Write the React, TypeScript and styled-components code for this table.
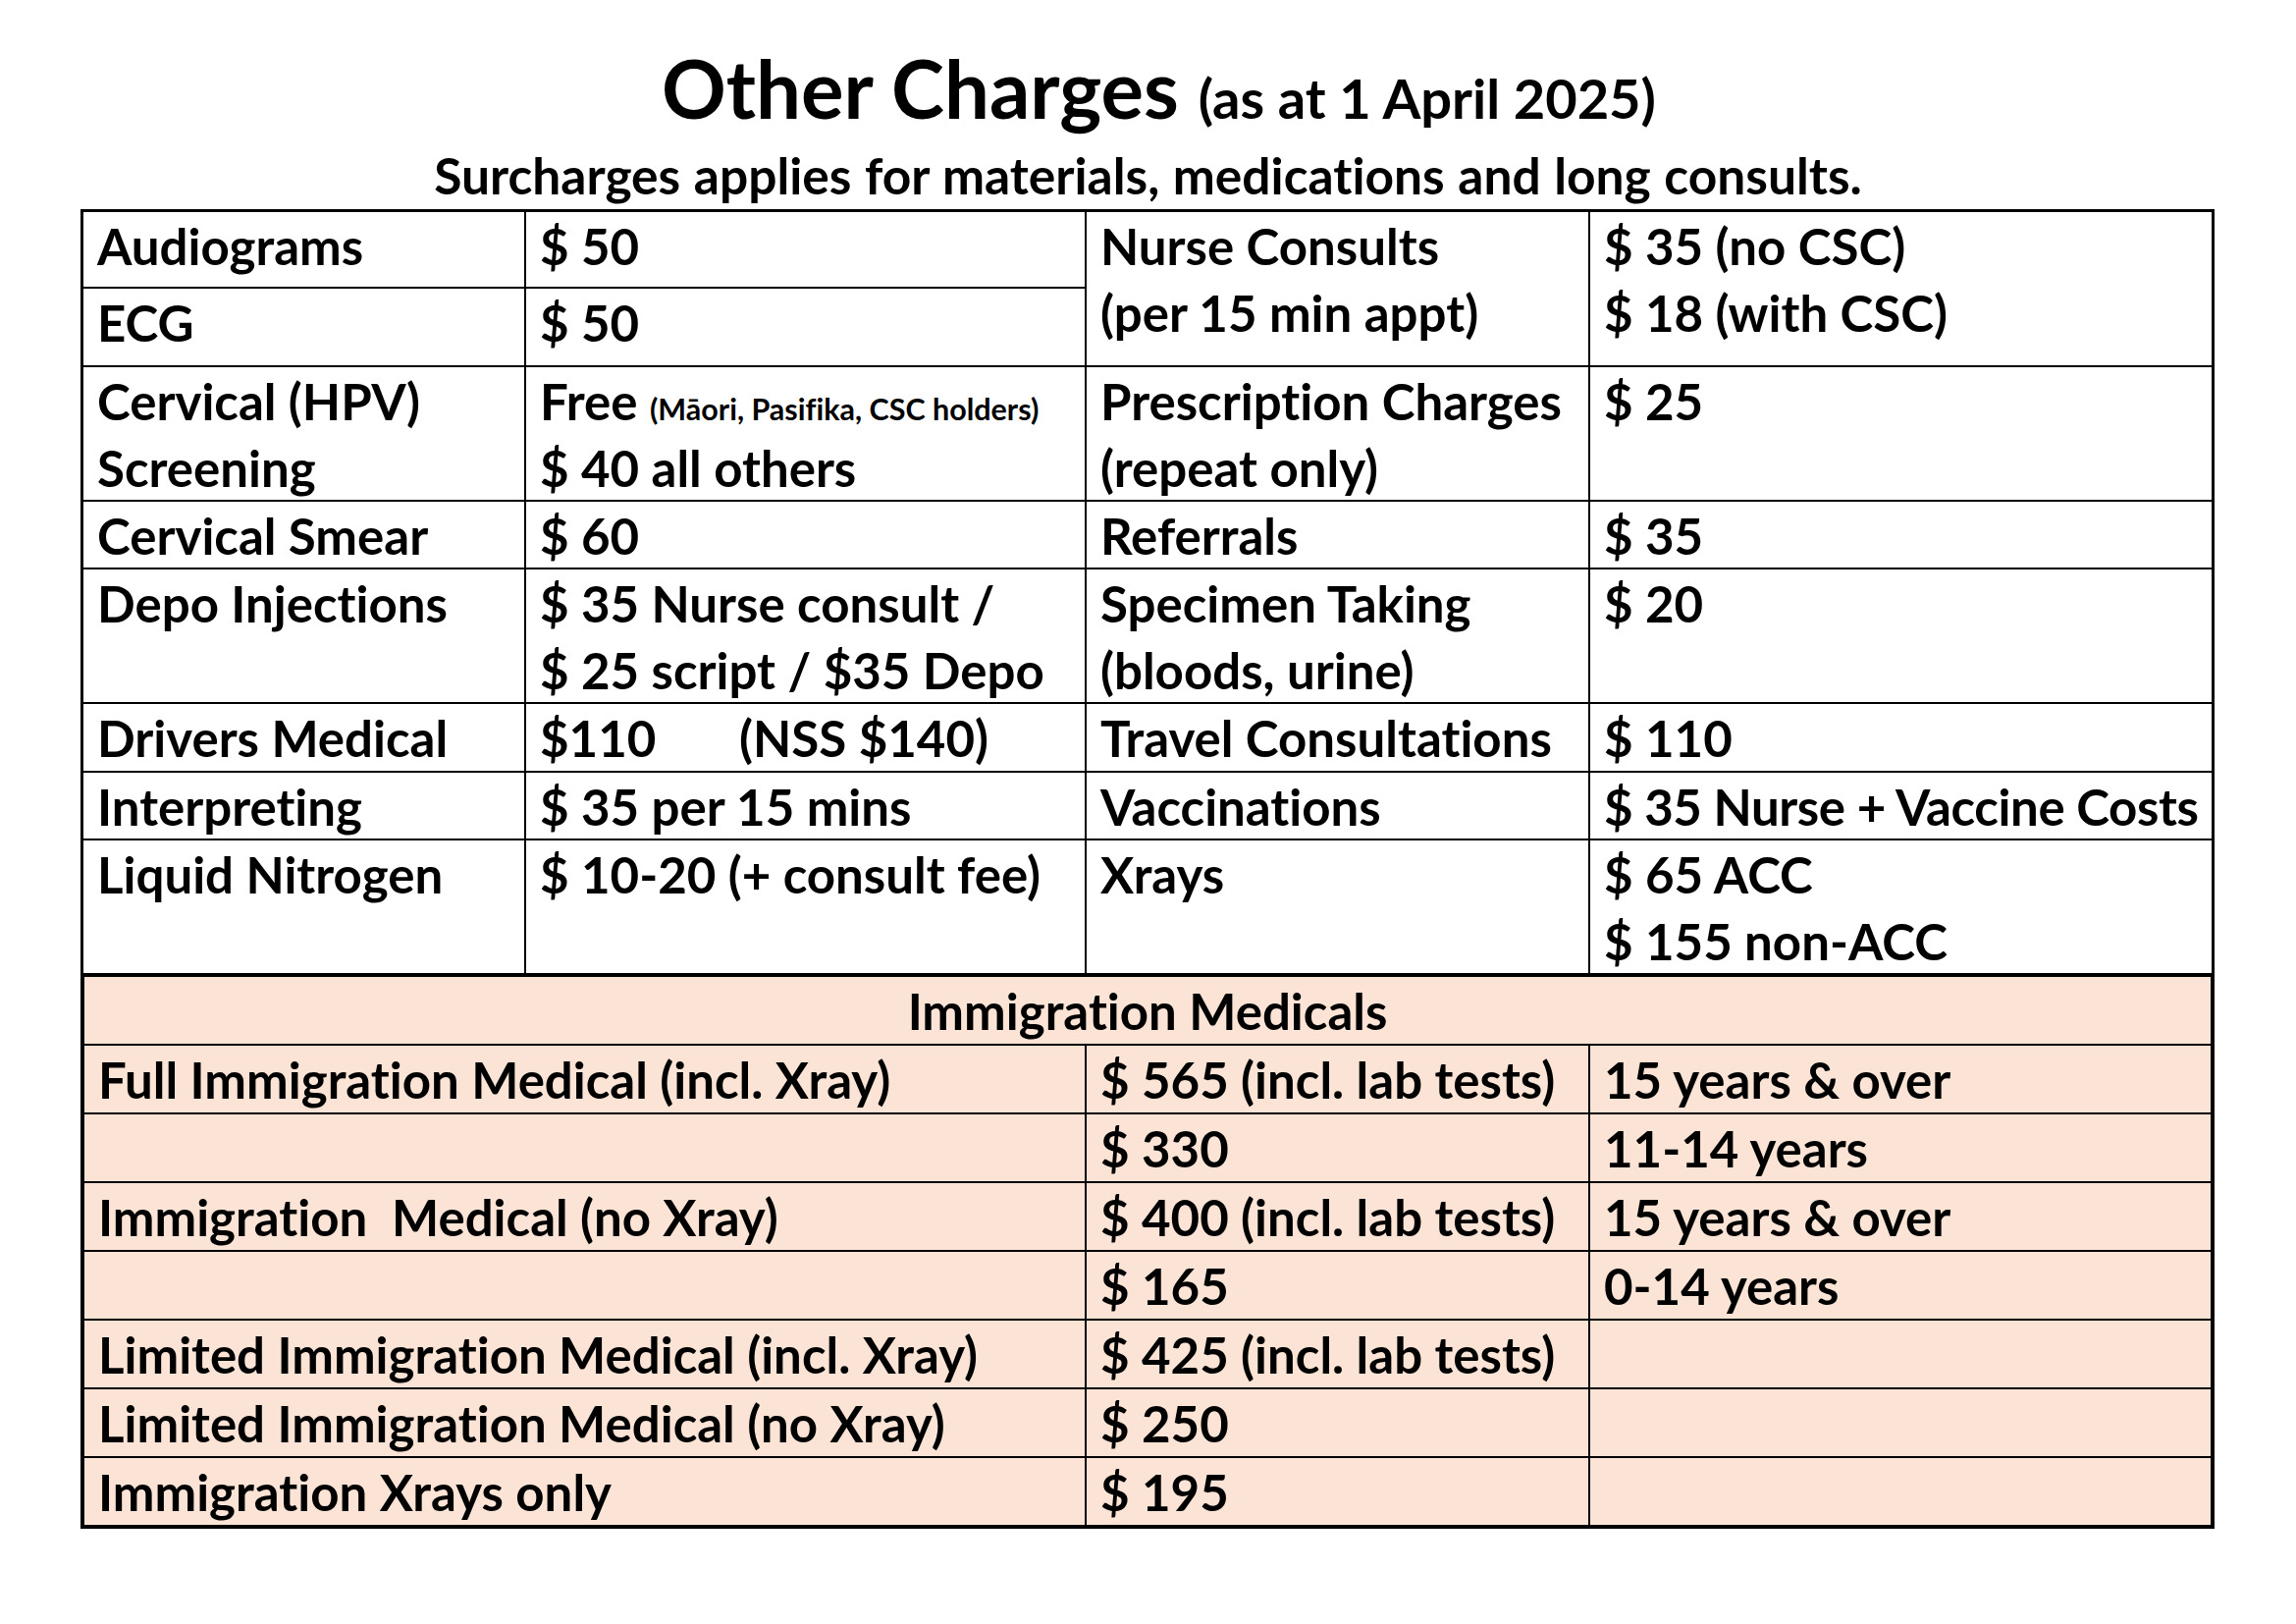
import React from "react";
import styled, { createGlobalStyle } from "styled-components";

const Global = createGlobalStyle`
  html, body { margin: 0; padding: 0; background: #ffffff; }
  body {
    font-family: Lato, "Liberation Sans", sans-serif;
    font-weight: 700;
    color: #000000;
    font-variant-ligatures: none;
    font-feature-settings: "liga" 0, "clig" 0;
  }
`;

const Page = styled.main`
  width: 2339px;
  height: 1654px;
  box-sizing: border-box;
  padding-top: 40px;
  background: #ffffff;
`;

const Header = styled.header`
  text-align: center;
`;

const Title = styled.h1`
  margin: 0;
  padding-left: 22px;
  font-size: 81.5px;
  line-height: 100px;
  font-weight: 700;
`;

const TitleNote = styled.span`
  font-size: 56px;
  line-height: 1;
`;

const Subtitle = styled.p`
  margin: 4px 0 0;
  font-size: 51.5px;
  line-height: 68px;
  word-spacing: 1px;
`;

const Board = styled.section`
  width: 2174px;
  margin: 1px 0 0 82px;
`;

const Grid = styled.div<{ $rows: string; $cols: string; $edge: number; $open?: boolean }>`
  display: grid;
  grid-template-columns: ${(p) => p.$cols};
  grid-template-rows: ${(p) => p.$rows};
  gap: 2px;
  background: #000000;
  border: ${(p) => p.$edge}px solid #000000;
  ${(p) => (p.$open ? "border-bottom-width: 0;" : "")}
`;

const Cell = styled.div<{
  $span?: number;
  $rowSpan?: number;
  $peach?: boolean;
  $center?: boolean;
  $tight?: boolean;
}>`
  grid-column: span ${(p) => p.$span ?? 1};
  grid-row: span ${(p) => p.$rowSpan ?? 1};
  background: ${(p) => (p.$peach ? "#FBE4D5" : "#ffffff")};
  padding: 0 14px;
  font-size: 51px;
  line-height: 68px;
  white-space: pre;
  overflow: hidden;
  text-align: ${(p) => (p.$center ? "center" : "left")};
  letter-spacing: ${(p) => (p.$tight ? "-0.4px" : "0")};
`;

const Lines = styled.div`
  margin-top: 1px;
`;

const Note = styled.span`
  font-size: 30.5px;
  line-height: 1;
`;

const Tab = styled.span<{ $w: number }>`
  display: inline-block;
  min-width: ${(p) => p.$w}px;
`;

type Row = [React.ReactNode, React.ReactNode, React.ReactNode];

const T = ({ children }: { children: React.ReactNode }) => <Lines>{children}</Lines>;

const immigration: Row[] = [
  ["Full Immigration Medical (incl. Xray)", "$ 565 (incl. lab tests)", "15 years & over"],
  ["", "$ 330", "11-14 years"],
  ["Immigration  Medical (no Xray)", "$ 400 (incl. lab tests)", "15 years & over"],
  ["", "$ 165", "0-14 years"],
  ["Limited Immigration Medical (incl. Xray)", "$ 425 (incl. lab tests)", ""],
  ["Limited Immigration Medical (no Xray)", "$ 250", ""],
  ["Immigration Xrays only", "$ 195", ""],
];

export default function App() {
  return (
    <Page>
      <Global />
      <Header>
        <Title>
          Other Charges <TitleNote>(as at 1 April 2025)</TitleNote>
        </Title>
        <Subtitle>Surcharges applies for materials, medications and long consults.</Subtitle>
      </Header>
      <Board>
        <Grid
          $open
          $edge={3}
          $cols="449px 569px 511px 633px"
          $rows="76px 78px 135px 67px 135px 68px 67px 135px"
        >
          <Cell><T>Audiograms</T></Cell>
          <Cell><T>$ 50</T></Cell>
          <Cell $rowSpan={2}><T>Nurse Consults{"\n"}(per 15 min appt)</T></Cell>
          <Cell $rowSpan={2}><T>$ 35 (no CSC){"\n"}$ 18 (with CSC)</T></Cell>
          <Cell><T>ECG</T></Cell>
          <Cell><T>$ 50</T></Cell>

          <Cell><T>Cervical (HPV){"\n"}Screening</T></Cell>
          <Cell><T>Free <Note>(Māori, Pasifika, CSC holders)</Note>{"\n"}$ 40 all others</T></Cell>
          <Cell><T>Prescription Charges{"\n"}(repeat only)</T></Cell>
          <Cell><T>$ 25</T></Cell>

          <Cell><T>Cervical Smear</T></Cell>
          <Cell><T>$ 60</T></Cell>
          <Cell><T>Referrals</T></Cell>
          <Cell><T>$ 35</T></Cell>

          <Cell><T>Depo Injections</T></Cell>
          <Cell><T>$ 35 Nurse consult /{"\n"}$ 25 script / $35 Depo</T></Cell>
          <Cell><T>Specimen Taking{"\n"}(bloods, urine)</T></Cell>
          <Cell><T>$ 20</T></Cell>

          <Cell><T>Drivers Medical</T></Cell>
          <Cell><T><Tab $w={203}>$110</Tab>(NSS $140)</T></Cell>
          <Cell><T>Travel Consultations</T></Cell>
          <Cell><T>$ 110</T></Cell>

          <Cell><T>Interpreting</T></Cell>
          <Cell><T>$ 35 per 15 mins</T></Cell>
          <Cell><T>Vaccinations</T></Cell>
          <Cell $tight><T>$ 35 Nurse + Vaccine Costs</T></Cell>

          <Cell><T>Liquid Nitrogen</T></Cell>
          <Cell><T>$ 10-20 (+ consult fee)</T></Cell>
          <Cell><T>Xrays</T></Cell>
          <Cell><T>$ 65 ACC{"\n"}$ 155 non-ACC</T></Cell>
        </Grid>
        <Grid
          $edge={4}
          $cols="448px 569px 511px 632px"
          $rows="68px repeat(7, 68px)"
        >
          <Cell $span={4} $peach $center><T>Immigration Medicals</T></Cell>
          {immigration.map((r, i) => (
            <React.Fragment key={i}>
              <Cell $span={2} $peach><T>{r[0]}</T></Cell>
              <Cell $peach><T>{r[1]}</T></Cell>
              <Cell $peach><T>{r[2]}</T></Cell>
            </React.Fragment>
          ))}
        </Grid>
      </Board>
    </Page>
  );
}
